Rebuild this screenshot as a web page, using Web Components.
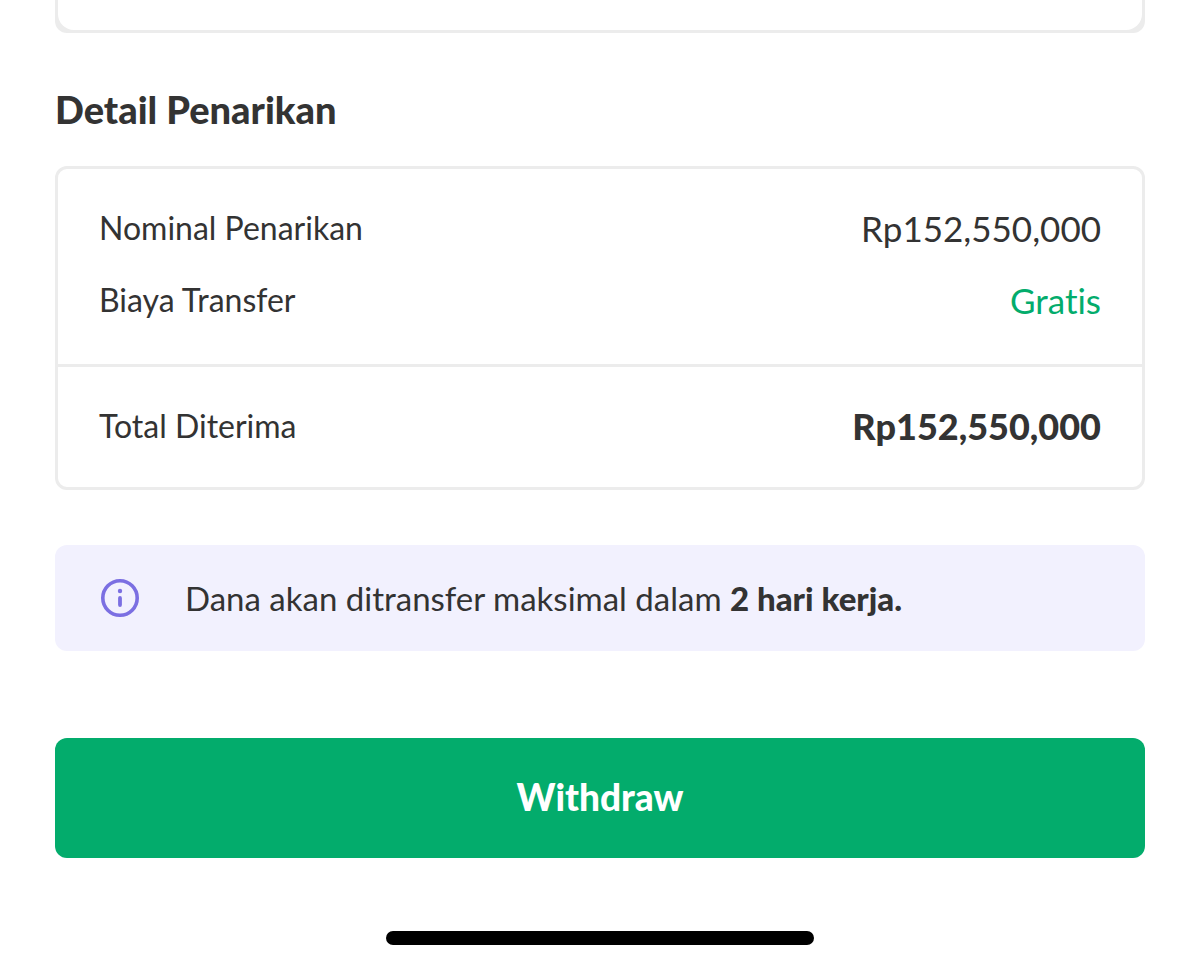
<!DOCTYPE html>
<html lang="id">
<head>
<meta charset="utf-8">
<meta name="viewport" content="width=device-width, initial-scale=1">
<title>Detail Penarikan</title>
<style>
  :root {
    --ink: #333333;
    --line: #ececec;
    --green: #03ac6c;
    --violet: #7b6fe2;
    --lilac: #f2f1fe;
    --radius: 12px;
    --heavy: 900;
  }
  body {
    margin: 0;
    background: #fff;
    color: var(--ink);
    font-family: Lato, "Open Sans", sans-serif;
    font-size: 33px;
    line-height: 40px;
    font-variant-ligatures: none;
  }
</style>
</head>
<body>
<withdraw-page>
  <previous-card></previous-card>
  <withdraw-details heading="Detail Penarikan">
    <detail-row label="Nominal Penarikan">Rp152,550,000</detail-row>
    <detail-row label="Biaya Transfer" tone="free">Gratis</detail-row>
    <detail-row slot="total" label="Total Diterima" tone="total">Rp152,550,000</detail-row>
  </withdraw-details>
  <info-notice>Dana akan ditransfer maksimal dalam <strong>2 hari kerja.</strong></info-notice>
  <primary-button>Withdraw</primary-button>
  <home-indicator slot="footer"></home-indicator>
</withdraw-page>

<script>
  const define = (name, html) => {
    const template = document.createElement('template');
    template.innerHTML = html;
    customElements.define(name, class extends HTMLElement {
      constructor() {
        super();
        this.attachShadow({ mode: 'open' }).append(template.content.cloneNode(true));
      }
      connectedCallback() {
        for (const node of this.shadowRoot.querySelectorAll('[data-text]')) {
          node.textContent = this.getAttribute(node.dataset.text);
        }
      }
    });
  };

  define('withdraw-page', `
    <style>
      :host { display: block; }
      main { display: flex; flex-direction: column; padding: 0 55px; }
    </style>
    <main><slot></slot></main>
    <slot name="footer"></slot>
  `);

  define('previous-card', `
    <style>
      :host {
        display: block; padding: 0 3px 3px; background: var(--line);
        border-radius: 0 0 var(--radius) var(--radius);
      }
      div { height: 30px; background: #fff; border-radius: 0 0 16px 16px; }
    </style>
    <div></div>
  `);

  define('withdraw-details', `
    <style>
      :host { display: block; margin-top: 52px; }
      h2 { margin: 0 0 33px; font-size: 38px; line-height: 48px; font-weight: var(--heavy); }
      .card { border: 3px solid var(--line); border-radius: var(--radius); }
      .rows { display: flex; flex-direction: column; gap: 32px; padding: 39px 41px 44px; }
      .total { border-top: 3px solid var(--line); padding: 39px 41px 41px; }
    </style>
    <section aria-labelledby="heading">
      <h2 id="heading" data-text="heading"></h2>
      <div class="card">
        <div class="rows"><slot></slot></div>
        <div class="total"><slot name="total"></slot></div>
      </div>
    </section>
  `);

  define('detail-row', `
    <style>
      :host { display: block; }
      dl { display: flex; justify-content: space-between; align-items: center; gap: 24px; margin: 0; }
      dt { font-size: 32px; }
      dd { margin: 0; font-size: 35px; text-align: right; }
      :host([tone="free"]) dd { color: var(--green); }
      :host([tone="total"]) dd { font-size: 36px; font-weight: var(--heavy); }
    </style>
    <dl><dt data-text="label"></dt><dd><slot></slot></dd></dl>
  `);

  define('info-notice', `
    <style>
      :host {
        display: flex; align-items: center; gap: 44px; margin-top: 55px; padding: 33px 44px;
        background: var(--lilac); border-radius: var(--radius);
      }
      svg { flex: none; width: 42px; height: 40px; }
      p { margin: 0; }
      ::slotted(strong) { font-weight: var(--heavy); }
    </style>
    <svg viewBox="0 0 42 40" fill="none" stroke="var(--violet)" aria-hidden="true">
      <circle cx="21" cy="20" r="17.2" stroke-width="3.6"/>
      <path d="M21 20v7" stroke-width="3.8" stroke-linecap="round"/>
      <circle cx="21" cy="13" r="2.2" fill="var(--violet)" stroke="none"/>
    </svg>
    <p><slot></slot></p>
  `);

  define('primary-button', `
    <style>
      :host { display: block; margin-top: 87px; }
      button {
        display: block; width: 100%; margin: 0; padding: 35px 36px 37px; border: 0;
        border-radius: var(--radius); background: var(--green); color: #fff;
        font: inherit; font-size: 37px; line-height: 48px; font-weight: var(--heavy); cursor: pointer;
      }
    </style>
    <button type="button"><slot></slot></button>
  `);

  define('home-indicator', `
    <style>
      :host { display: flex; justify-content: center; padding: 73px 0 21px; }
      span { width: 428px; max-width: 40%; height: 14px; border-radius: 7px; background: #000; }
    </style>
    <span></span>
  `);
</script>
</body>
</html>
